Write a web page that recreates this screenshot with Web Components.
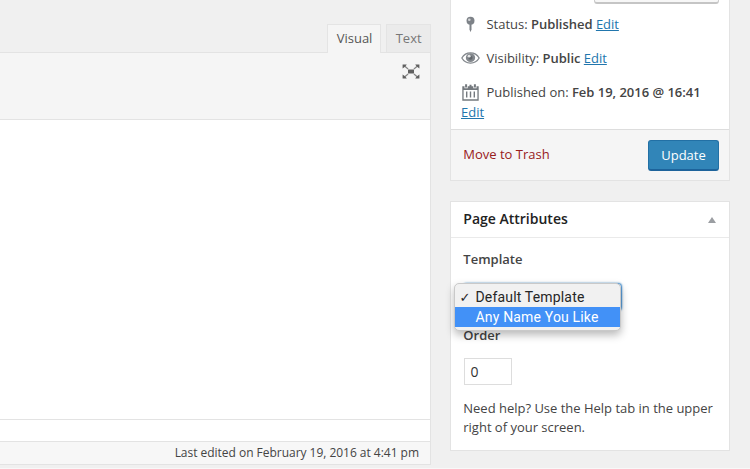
<!DOCTYPE html>
<html lang="en"><head><meta charset="utf-8"><title>Edit Page</title>
<style>
html,body{margin:0;height:469px;overflow:hidden;background:#f0f0f0}
body{font:13px/20px "Open Sans",sans-serif;color:#444}
</style></head><body>
<edit-screen></edit-screen>
<script>
const define=(name,html)=>customElements.define(name,class extends HTMLElement{
  constructor(){super();this.attachShadow({mode:'open'}).innerHTML='<style>*{box-sizing:border-box}</style>'+html;}
});

define('editor-tab',`<style>
:host{display:block;box-sizing:border-box;height:28px;padding:3px 0 0 8.700px;border:1px solid #e4e4e4;border-bottom:0;background:#ebebeb;color:#777;line-height:20px;font-size:13px}
:host([active]){background:#f5f5f5;color:#555;height:29px}
</style><slot></slot>`);

define('page-editor',`<style>
:host{display:flex;flex-direction:column;width:431px;height:465px;padding-top:24px;box-sizing:border-box}
.tabs{display:flex;justify-content:flex-end;gap:5px;height:28px;position:relative}
.v{width:54px}.t{width:45px}
.bar{height:68px;border:1px solid #e3e3e3;border-left:0;background:#f5f5f5;display:flex;justify-content:flex-end;padding:10.500px 10.500px 0 0}
.canvas{height:300px;background:#fff;border-right:1px solid #e3e3e3;border-bottom:1px solid #e3e3e3}
.path{height:22px;background:#fff;border-right:1px solid #e3e3e3;border-bottom:1px solid #e3e3e3}
.foot{height:23px;background:#f7f7f7;border-right:1px solid #e3e3e3;border-bottom:1px solid #e3e3e3;text-align:right;padding-right:11px;font-size:12px;line-height:21px;letter-spacing:-.025px}
svg{display:block}
</style>
<div class="tabs"><editor-tab class="v" active>Visual</editor-tab><editor-tab class="t">Text</editor-tab></div>
<div class="bar"><svg width="18" height="15" viewBox="0 0 18 15"><path d="M2.500 2l3.600 3M15.500 2l-3.600 3M2.500 13l3.600-3M15.500 13l-3.600-3" stroke="#858585" stroke-width="1.200"/><g fill="#606060"><path d="M.6.5h4.200L3.700 2 2.300 3.300.6 4.600zM17.400.5h-4.200l1.100 1.500 1.400 1.300 1.700 1.300zM.6 14.500h4.200L3.700 13l-1.400-1.300-1.700-1.300zM17.400 14.500h-4.200l1.100-1.500 1.400-1.300 1.700-1.300z"/><path d="M6 5.500h6v4H6z"/></g></svg></div>
<div class="canvas"></div><div class="path"></div>
<div class="foot"><span>Last edited on February 19, 2016 at 4:41 pm</span></div>`);

define('meta-row',`<style>
:host{display:flex;align-items:flex-start;height:20px;gap:6.500px}
.i{width:19px;height:20px;display:flex;align-items:center;justify-content:center;flex:none}
.x{white-space:nowrap;letter-spacing:-.02px}
</style><span class="i"><slot name="icon"></slot></span><span class="x"><slot></slot></span>`);

define('publish-box',`<style>
:host{display:flex;flex-direction:column;width:280px;height:181px;box-sizing:border-box;border:1px solid #e3e3e3;border-top:0;background:#fff}
a{color:#2176ad;text-decoration:underline}
b{font-weight:600}
.top{height:4px;display:flex;justify-content:flex-end;padding-right:10px}
.top i{width:125px;height:4px;border:1px solid #ccc;border-top:0;border-bottom:2px solid #c5c5c5;border-radius:0 0 3px 3px;background:#f7f7f7}
.rows{display:flex;flex-direction:column;gap:14px;padding:10px 0 0 10px;height:125px}
.group{display:flex;flex-direction:column}
svg{display:block}
.actions{height:51px;border-top:1px solid #ddd;background:#f5f5f5;display:flex;justify-content:space-between;padding:10px 10px 0 12.300px}
.actions a{color:#98201b;text-decoration:none;line-height:20px;margin-top:4px}
button{font:500 13px/20px "Open Sans",sans-serif;height:31px;width:71px;padding:0 0 1px;margin:0;background:#3185b8;color:#fff;border:1px solid #2270a5;border-bottom:2px solid #1d639b;border-radius:3px}
</style>
<div class="top"><i></i></div>
<div class="rows">
<meta-row><svg slot="icon" width="10" height="17" viewBox="0 0 10 17"><circle cx="4.500" cy="4.800" r="4" fill="#7d8288"/><path d="M3.500 8h2v5.500l-1 2.700-1-2.700z" fill="#7d8288"/><circle cx="3.300" cy="3.700" r="1.300" fill="#d4d6d8"/></svg>Status: <b>Published</b> <a>Edit</a></meta-row>
<meta-row><svg slot="icon" width="19" height="12" viewBox="0 0 18 12" preserveAspectRatio="none"><path d="M.8 6C4.500-.8 13.500-.8 17.200 6 13.500 12.800 4.500 12.800.8 6z" fill="#fff" stroke="#82878c" stroke-width="1.200"/><circle cx="9" cy="5.700" r="4.400" fill="#82878c"/><circle cx="9" cy="5.700" r="2" fill="#62676c"/><circle cx="7.700" cy="4.200" r="1.400" fill="#e4e5e6"/></svg>Visibility: <b>Public</b> <a>Edit</a></meta-row>
<div class="group"><meta-row><svg slot="icon" width="17" height="17" viewBox="0 0 17 17"><path fill="#74797e" fill-rule="evenodd" d="M.3 2.300h2.200v1.900h3.200V2.300h5.600v1.900h3.200V2.300h2.200v14.400H.3zM1.600 6v9.300h13.800V6z"/><path fill="#74797e" d="M3.100.3h2v3.200h-2zM7.500.8h2v2.700h-2zM11.900.3h2v3.200h-2zM4 7.500h1.400v6H4zM7.800 7.500h1.400v6H7.800zM11.600 7.500H13v6h-1.400z"/></svg>Published on: <b>Feb 19, 2016 @ 16:41</b></meta-row><a>Edit</a></div>
</div>
<div class="actions"><a>Move to Trash</a><button>Update</button></div>`);

define('select-menu',`<style>
:host{position:absolute;left:3px;top:81px;width:167px;height:48px;box-sizing:border-box;padding-top:4px;border:1px solid #c9c9c9;border-radius:5px;background:#f1f1f1;box-shadow:0 4px 9px rgba(0,0,0,.28);font:14px/19px Roboto,sans-serif;letter-spacing:.17px;color:#262626}
div{height:19px;display:flex;padding-left:4.500px}
.c{width:16px;font:bold 13px/19px "DejaVu Sans",sans-serif}
.on{background:#4291f7;color:#fff;height:20px;line-height:20px}
.o{white-space:nowrap}
</style><div><span class="c">✓</span><span class="o">Default Template</span></div><div class="on"><span class="c"></span><span class="o">Any Name You Like</span></div>`);

define('attributes-box',`<style>
:host{display:block;position:relative;width:280px;height:250px;box-sizing:border-box;border:1px solid #e3e3e3;background:#fff}
header{height:36px;border-bottom:1px solid #eaeaea;display:flex;justify-content:space-between;align-items:center;padding:0 13px 1px 12.300px;color:#222;font-size:14px;font-weight:600}
header i{border:4px solid transparent;border-bottom:6px solid #9b9ea2;border-top:0;margin-top:2px}
main{display:flex;flex-direction:column;align-items:flex-start;padding:11px 0 0 12.300px}
b{font-weight:600}
.sel{height:28px;width:159px;border:1px solid #5b9dd9;border-radius:4px;box-shadow:0 0 2px #3e8bc7;margin:14px 0 13.500px;background:#fff}
.num{width:48.500px;height:27px;border:1px solid #ddd;margin:13.500px 0 14px .7px;padding:3px 0 0 5.500px;font-size:14px;line-height:20px;color:#333}
p{margin:0;line-height:19px;width:260px;letter-spacing:-.01px}
</style><header><span>Page Attributes</span><i></i></header>
<main><b>Template</b><div class="sel"></div><b>Order</b><div class="num">0</div><p>Need help? Use the Help tab in the upper<br>right of your screen.</p></main><select-menu></select-menu>`);

define('edit-screen',`<style>
:host{display:flex;gap:19px;height:468px;border-bottom:1px solid #f8f8f8}
aside{display:flex;flex-direction:column;gap:20px}
</style><page-editor></page-editor><aside><publish-box></publish-box><attributes-box></attributes-box></aside>`);
</script></body></html>
